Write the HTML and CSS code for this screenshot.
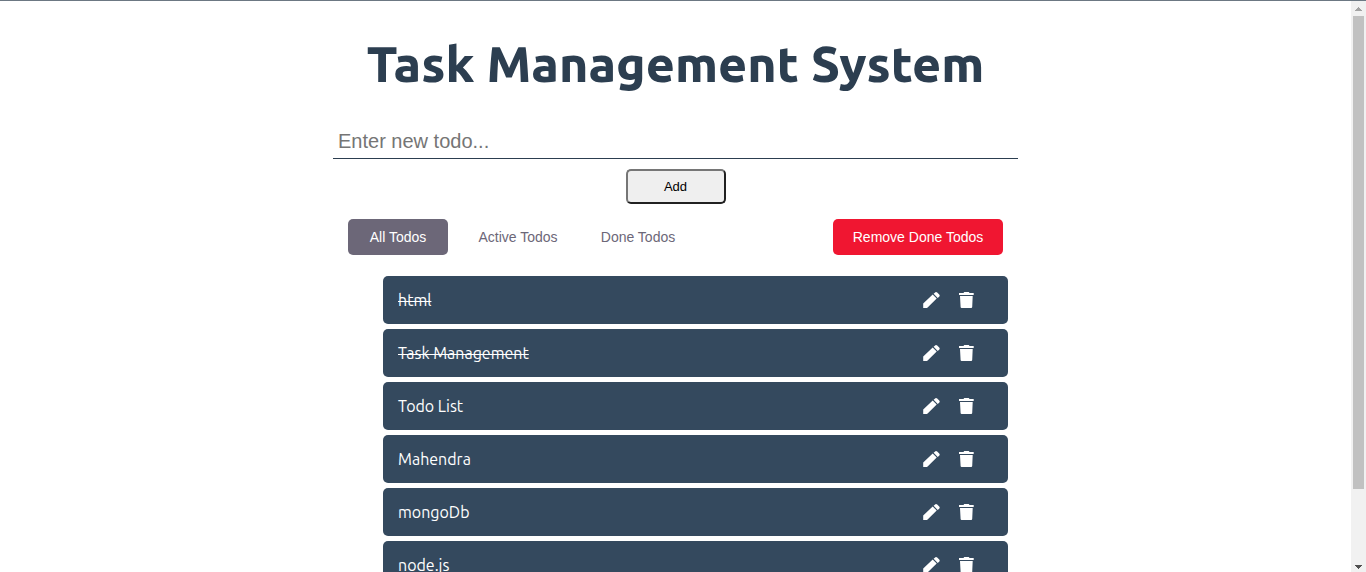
FILE: index.html
```html
<!DOCTYPE html>
<html lang="en">
<head>
<meta charset="utf-8">
<meta name="viewport" content="width=device-width, initial-scale=1">
<title>Task Management System</title>
<link rel="stylesheet" href="styles.css">
</head>
<body>
<svg class="sprite" aria-hidden="true">
  <symbol id="pen" viewBox="0 0 17 16"><path d="M0.2 11.4L9.7 2.5L13.7 6.5L4.6 15.4Q4 16 3.2 16H0.2ZM10.6 1.8L11.8 0.7Q13-0.4 14.2 0.6L16.2 2.5Q17.2 3.6 16.2 4.7L14.7 5.9Z"/></symbol>
  <symbol id="trash" viewBox="0 0 15 16"><path d="M0 1H4.5L5.2 0H9.8L10.5 1H14.7V3H0ZM1 4H13.7L13.2 15Q13.1 16 12.2 16H2.6Q1.7 16 1.6 15Z"/></symbol>
</svg>
<div class="window">
  <main class="app">
    <h1 class="title">Task Management System</h1>
    <form class="todo-form">
      <input class="todo-input" type="text" placeholder="Enter new todo..." aria-label="New todo">
      <button class="add-button" type="button">Add</button>
    </form>
    <div class="toolbar">
      <div class="tabs">
        <button class="button tab tab-active" type="button">All Todos</button>
        <button class="button tab" type="button">Active Todos</button>
        <button class="button tab" type="button">Done Todos</button>
      </div>
      <button class="button remove" type="button">Remove Done Todos</button>
    </div>
    <ul class="todo-list">
      <li class="todo"><span class="todo-text done">html</span><button class="icon-button" type="button" aria-label="Edit"><svg class="pen"><use href="#pen"/></svg></button><button class="icon-button" type="button" aria-label="Delete"><svg class="trash"><use href="#trash"/></svg></button></li>
      <li class="todo"><span class="todo-text done">Task Management</span><button class="icon-button" type="button" aria-label="Edit"><svg class="pen"><use href="#pen"/></svg></button><button class="icon-button" type="button" aria-label="Delete"><svg class="trash"><use href="#trash"/></svg></button></li>
      <li class="todo"><span class="todo-text">Todo List</span><button class="icon-button" type="button" aria-label="Edit"><svg class="pen"><use href="#pen"/></svg></button><button class="icon-button" type="button" aria-label="Delete"><svg class="trash"><use href="#trash"/></svg></button></li>
      <li class="todo"><span class="todo-text">Mahendra</span><button class="icon-button" type="button" aria-label="Edit"><svg class="pen"><use href="#pen"/></svg></button><button class="icon-button" type="button" aria-label="Delete"><svg class="trash"><use href="#trash"/></svg></button></li>
      <li class="todo"><span class="todo-text">mongoDb</span><button class="icon-button" type="button" aria-label="Edit"><svg class="pen"><use href="#pen"/></svg></button><button class="icon-button" type="button" aria-label="Delete"><svg class="trash"><use href="#trash"/></svg></button></li>
      <li class="todo"><span class="todo-text">node.js</span><button class="icon-button" type="button" aria-label="Edit"><svg class="pen"><use href="#pen"/></svg></button><button class="icon-button" type="button" aria-label="Delete"><svg class="trash"><use href="#trash"/></svg></button></li>
    </ul>
  </main>
  <div class="scrollbar" aria-hidden="true">
    <svg class="arrow arrow-up" viewBox="0 0 7 4"><path d="M3 0H4V1H5V2H6V3H7V4H0V3H1V2H2V1H3Z"/></svg>
    <div class="track"><div class="thumb"></div></div>
    <svg class="arrow" viewBox="0 0 7 4"><path d="M0 0H7V1H6V2H5V3H4V4H3V3H2V2H1V1H0Z"/></svg>
  </div>
</div>
</body>
</html>
```
FILE: styles.css
```css
* {
  box-sizing: border-box;
}

body {
  margin: 0;
  background: #fff;
  color: #2c3e50;
  font-family: Ubuntu, "Noto Sans", sans-serif;
  font-size: 16px;
}

button,
input {
  font-family: "Liberation Sans", Arial, sans-serif;
}

.sprite {
  display: none;
}

.window {
  display: flex;
  height: 100vh;
  overflow: hidden;
  border-top: 1px solid #6c7883;
}

.app {
  flex: 1;
  min-width: 0;
  overflow: hidden;
}

.title {
  margin: 32px 0;
  font-size: 50px;
  font-weight: 800;
  line-height: 60px;
  text-align: center;
}

.todo-form,
.toolbar,
.todo-list {
  max-width: 685px;
  margin: 0 auto;
}

.todo-form {
  display: flex;
  flex-direction: column;
  align-items: center;
  gap: 10px;
}

.todo-input {
  width: 100%;
  height: 34px;
  padding: 5px;
  border: 0;
  border-bottom: 1px solid #2c3e50;
  outline: 0;
  background: none;
  font-size: 20px;
}

.todo-input::placeholder {
  color: #757575;
}

.add-button {
  width: 100px;
  height: 35px;
  border: 2px solid;
  border-color: #767676 #212121 #212121 #767676;
  border-radius: 5px;
  background: #efefef;
  color: #000;
  font-size: 13px;
}

.toolbar {
  display: flex;
  justify-content: space-between;
  padding: 15px;
}

.tabs {
  display: flex;
  gap: 20px;
}

.button {
  height: 36px;
  padding: 0;
  border: 0;
  border-radius: 5px;
  background: none;
  font-size: 14px;
  white-space: nowrap;
}

.tab {
  width: 100px;
  color: #6c6778;
}

.tab-active {
  background: #6c6778;
  color: #fff;
}

.remove {
  width: 170px;
  background: #f01631;
  color: #fff;
}

.todo-list {
  display: flex;
  flex-direction: column;
  gap: 5px;
  padding: 6px 10px 40px 50px;
  list-style: none;
}

.todo {
  display: flex;
  flex: none;
  align-items: center;
  height: 48px;
  padding: 0 24px 0 15px;
  border-radius: 5px;
  background: #34495e;
  color: #fff;
}

.todo-text {
  flex: 1;
  font-weight: 450;
}

.done {
  text-decoration: line-through 1px;
}

.icon-button {
  display: flex;
  align-items: center;
  justify-content: center;
  width: 35px;
  height: 35px;
  padding: 0;
  border: 0;
  background: none;
  color: #fff;
}

.pen {
  width: 17px;
  height: 16px;
  fill: currentColor;
}

.trash {
  width: 15px;
  height: 16px;
  fill: currentColor;
}

.scrollbar {
  display: flex;
  flex-direction: column;
  align-items: center;
  gap: 5px;
  width: 15px;
  padding: 6px 0 3px;
  background: #f1f1f1;
}

.arrow {
  width: 7px;
  height: 4px;
  fill: #505050;
  shape-rendering: crispEdges;
}

.arrow-up {
  fill: #a3a3a3;
}

.track {
  flex: 1;
  width: 11px;
}

.thumb {
  height: 87%;
  background: #c1c1c1;
}
```
